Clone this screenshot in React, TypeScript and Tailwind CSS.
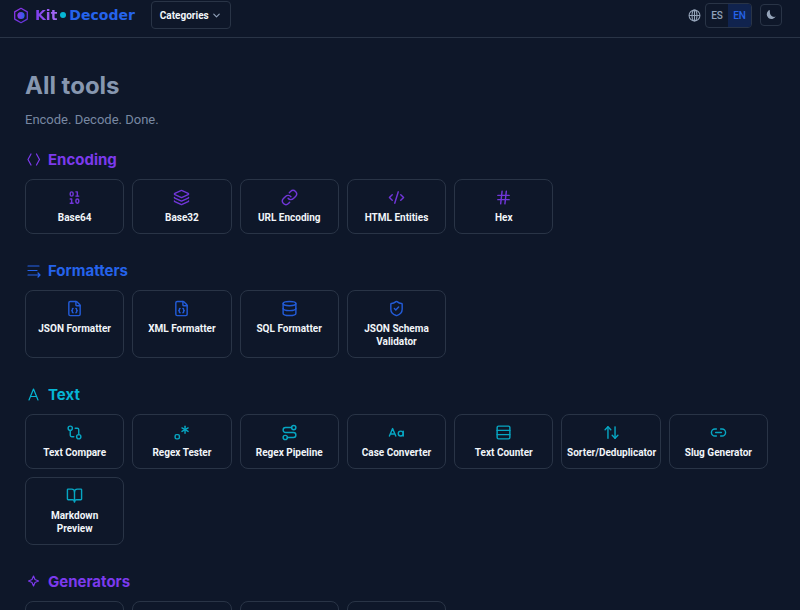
import type { ReactNode } from "react";
import {
  ArrowUpDown,
  Binary,
  BookOpen,
  ChevronDown,
  CodeXml,
  Database,
  FileBraces,
  GitCompare,
  Hash,
  Layers,
  Link,
  Link2,
  Regex,
  Route,
  ShieldCheck,
} from "lucide-react";
import type { LucideIcon } from "lucide-react";

type IconProps = { size?: number | string; strokeWidth?: number | string };
type Tool = { name: string; icon: LucideIcon | typeof CaseIcon };

function CaseIcon({ size = 17, strokeWidth = 2 }: IconProps) {
  return (
    <svg width={size} height={size} viewBox="0 0 24 24" fill="none" stroke="currentColor" strokeWidth={strokeWidth} strokeLinecap="round" strokeLinejoin="round" aria-hidden="true">
      <path d="M2 17 6.500 6.500 11 17M3.500 14h6" />
      <circle cx="18" cy="13.500" r="3.500" />
      <path d="M21.500 10v7" />
    </svg>
  );
}

function RowsIcon({ size = 17, strokeWidth = 2 }: IconProps) {
  return (
    <svg width={size} height={size} viewBox="0 0 24 24" fill="none" stroke="currentColor" strokeWidth={strokeWidth} strokeLinecap="round" strokeLinejoin="round" aria-hidden="true">
      <rect x="3" y="3" width="18" height="18" rx="2" />
      <path d="M3 9h18M3 15h18" />
    </svg>
  );
}

function HeadingIcon({ children }: { children: ReactNode }) {
  return (
    <svg width="17" height="17" viewBox="0 1 17 17" fill="none" stroke="currentColor" strokeWidth="1.2" strokeLinecap="round" strokeLinejoin="round" aria-hidden="true">
      {children}
    </svg>
  );
}

const encoding: Tool[] = [
  { name: "Base64", icon: Binary },
  { name: "Base32", icon: Layers },
  { name: "URL Encoding", icon: Link },
  { name: "HTML Entities", icon: CodeXml },
  { name: "Hex", icon: Hash },
];
const formatters: Tool[] = [
  { name: "JSON Formatter", icon: FileBraces },
  { name: "XML Formatter", icon: FileBraces },
  { name: "SQL Formatter", icon: Database },
  { name: "JSON Schema Validator", icon: ShieldCheck },
];
const text: Tool[] = [
  { name: "Text Compare", icon: GitCompare },
  { name: "Regex Tester", icon: Regex },
  { name: "Regex Pipeline", icon: Route },
  { name: "Case Converter", icon: CaseIcon },
  { name: "Text Counter", icon: RowsIcon },
  { name: "Sorter/Deduplicator", icon: ArrowUpDown },
  { name: "Slug Generator", icon: Link2 },
  { name: "Markdown Preview", icon: BookOpen },
];

function Section({ title, color, icon, children }: { title: string; color: string; icon: ReactNode; children: ReactNode }) {
  return (
    <section className={color}>
      <h2 className="mb-[9px] flex h-5 items-center gap-[6px] font-['Inter','Liberation_Sans',sans-serif] text-[15px] leading-5 font-bold">
        {icon}
        {title}
      </h2>
      <div className="grid grid-cols-[repeat(auto-fill,minmax(94px,1fr))] gap-2">{children}</div>
    </section>
  );
}

function ToolCard({ tool }: { tool: Tool }) {
  const Icon = tool.icon;
  return (
    <a href="#" className="flex flex-col items-center gap-[5px] rounded-lg border border-[#293446] px-[2px] py-[9px]">
      <span className="opacity-90">
        <Icon size={17} strokeWidth={2} />
      </span>
      <span className="max-w-24 px-1 text-center text-[10px] leading-[13px] font-bold text-slate-100">{tool.name}</span>
    </a>
  );
}

export default function App() {
  return (
    <div className="h-screen overflow-hidden bg-[#0e1729] font-['Roboto','Liberation_Sans',sans-serif]">
      <header className="flex h-[38px] items-center border-b border-[#293446] pr-[18px] pb-[7px] pl-[13px]">
        <a href="#" className="flex items-center font-['DejaVu_Sans',sans-serif] text-[14px] leading-5 font-bold">
          <svg width="16" height="17" viewBox="0 0 16 17" aria-hidden="true">
            <defs>
              <linearGradient id="mark" x1="0" y1="0" x2="1" y2="1">
                <stop offset="0" stopColor="#9333ea" />
                <stop offset="1" stopColor="#5b35d5" />
              </linearGradient>
              <linearGradient id="core" x1="0" y1="0" x2="1" y2="0">
                <stop offset="0" stopColor="#9333ea" />
                <stop offset="1" stopColor="#2563eb" />
              </linearGradient>
            </defs>
            <path d="M8 1.300 14.300 4.900V12.100L8 15.700 1.700 12.100V4.900Z" fill="none" stroke="url(#mark)" strokeWidth="1.300" strokeLinejoin="round" />
            <circle cx="8" cy="8.500" r="3.600" fill="url(#core)" />
          </svg>
          <span className="ml-[6px] bg-linear-to-r from-[#7c3aed] to-[#a96bf5] bg-clip-text text-transparent">Kit</span>
          <span className="mx-[3px] size-[6px] rounded-full bg-[#06b6d4]" />
          <span className="text-[#2563eb]">Decoder</span>
        </a>
        <button className="ml-4 flex h-[28px] items-center gap-0.5 rounded border border-[#293446] px-2 text-[10px] font-bold text-slate-100">
          Categories
          <ChevronDown size={11} strokeWidth={2.5} className="text-slate-400" />
        </button>
        <div className="ml-auto flex items-center">
          <svg width="13" height="13" viewBox="0 0 24 24" fill="none" stroke="#94a3b8" strokeWidth="2" className="mr-1" aria-hidden="true">
            <circle cx="12" cy="12" r="10" />
            <ellipse cx="12" cy="12" rx="4.500" ry="10" />
            <path d="M2 12h20M12 2v20" />
          </svg>
          <div className="flex h-[25px] overflow-hidden rounded border border-[#293446] text-[10px] font-medium">
            <button className="w-[22px] text-slate-400">ES</button>
            <button className="w-[23px] bg-[#10234e] text-[#2563eb]">EN</button>
          </div>
          <button aria-label="Dark theme" className="ml-2 flex size-[22px] items-center justify-center rounded border border-[#293446]">
            <svg width="10" height="10" viewBox="0 0 10 10" fill="#94a3b8" aria-hidden="true">
              <path d="M2.500.5A4.800 4.800 0 1 0 9.700 6.600C6.500 8 3 5 4 .5C3.500.2 3 .3 2.500.5Z" />
            </svg>
          </button>
        </div>
      </header>
      <main className="pt-8 pr-8 pl-[25px]">
        <h1 className="font-['Inter','Liberation_Sans',sans-serif] text-[24px] leading-8 font-bold text-[#8797b0]">All tools</h1>
        <p className="mt-2 text-[13px] leading-5 text-[#7888a2]">Encode. Decode. Done.</p>
        <div className="mt-5 flex flex-col gap-[27px]">
          <Section title="Encoding" color="text-[#7c3aed]" icon={<HeadingIcon><path d="M6 3 3 8.500 6 14M11.500 3l3 5.500-3 5.500" /></HeadingIcon>}>
            {encoding.map((t) => <ToolCard key={t.name} tool={t} />)}
          </Section>
          <Section title="Formatters" color="text-[#2563eb]" icon={<HeadingIcon><path d="M3 4h11M3 8.500h9M3 13h11M13 11l2 2-2 2" /></HeadingIcon>}>
            {formatters.map((t) => <ToolCard key={t.name} tool={t} />)}
          </Section>
          <Section title="Text" color="text-[#06b6d4]" icon={<HeadingIcon><path d="M4 14 8.500 3 13 14M5.500 10.500h6" /></HeadingIcon>}>
            {text.map((t) => <ToolCard key={t.name} tool={t} />)}
          </Section>
          <Section title="Generators" color="text-[#7c3aed]" icon={<HeadingIcon><path d="M8.500 3 10 6.500 13.500 8 10 9.500 8.500 13 7 9.500 3.500 8 7 6.500Z" /></HeadingIcon>}>
            {[0, 1, 2, 3].map((n) => <div key={n} className="h-[55px] rounded-lg border border-[#293446]" />)}
          </Section>
        </div>
      </main>
    </div>
  );
}
